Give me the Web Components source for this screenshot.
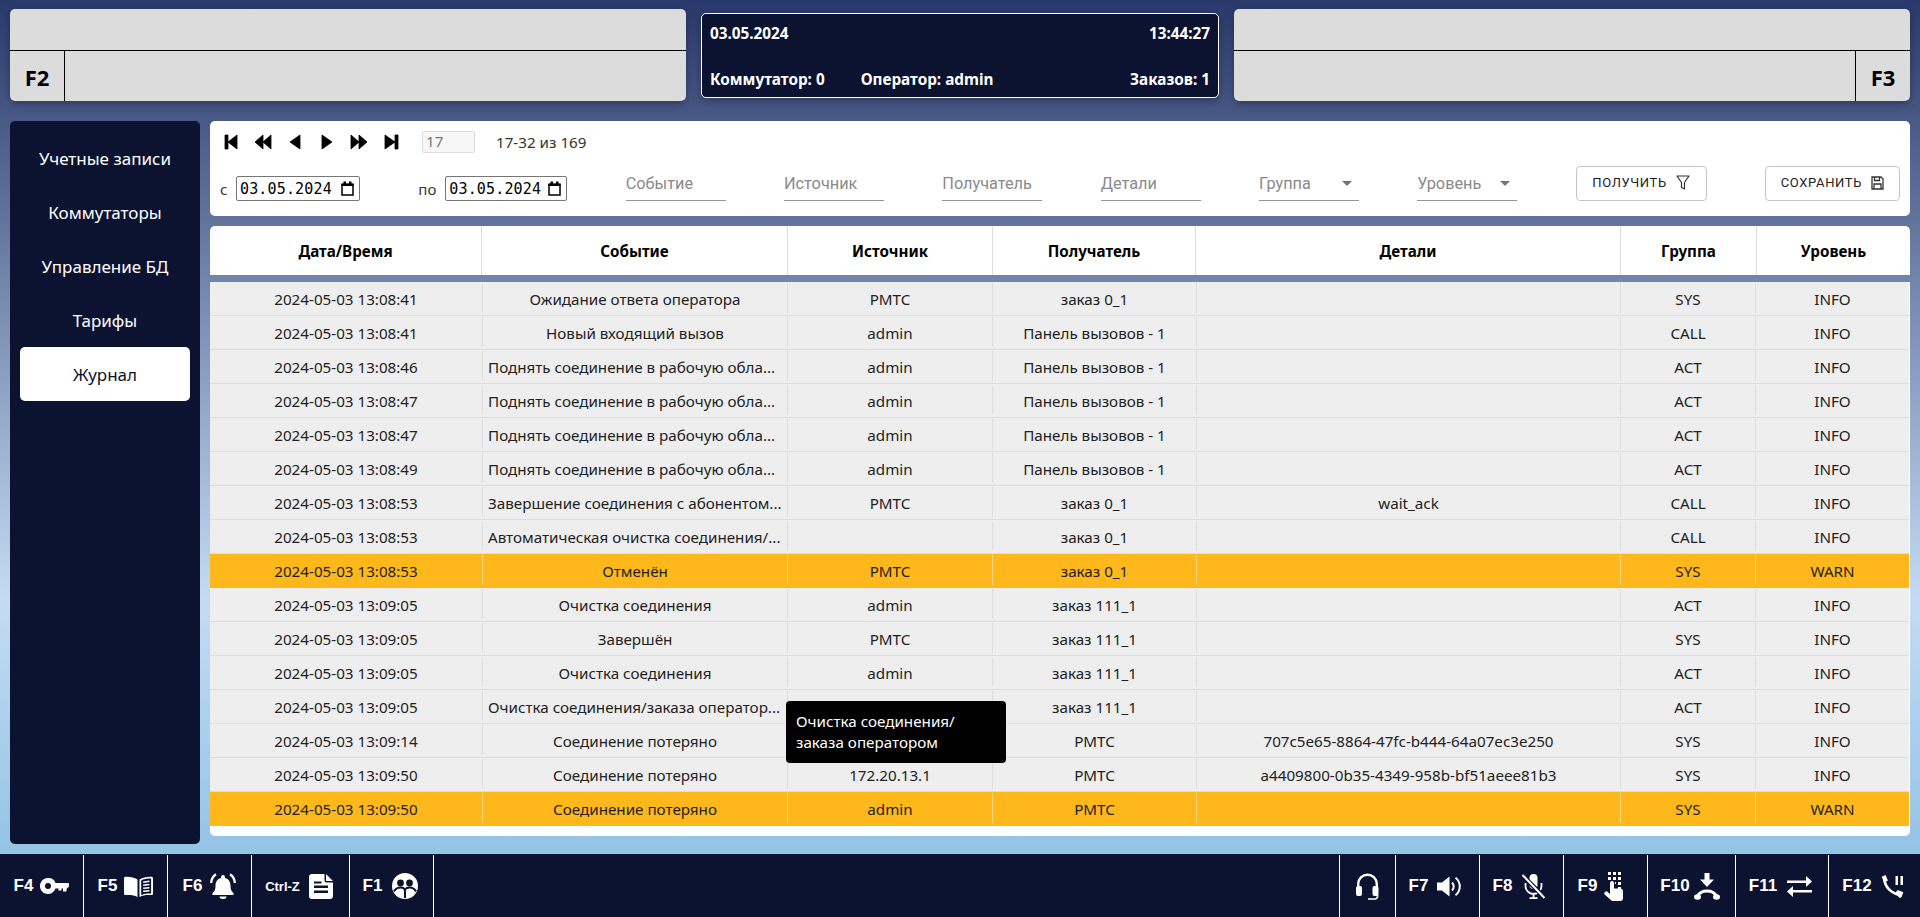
<!DOCTYPE html>
<html lang="ru">
<head>
<meta charset="utf-8">
<title>Журнал</title>
<style>
    html, body { margin: 0; height: 100%; }
    body {
        font-family: "Noto Sans", "Open Sans", sans-serif;
        background: linear-gradient(180deg, #29396b 0, #c5dbf3 600px, #93c3e5 854px);
        overflow: hidden;
    }
</style>
</head>
<body>
<app-shell>
    <top-panel slot="top" key-name="F2"></top-panel>
    <info-panel slot="top"></info-panel>
    <top-panel slot="top" key-name="F3" flip></top-panel>

    <side-nav slot="side">
        <nav-item>Учетные записи</nav-item>
        <nav-item>Коммутаторы</nav-item>
        <nav-item>Управление БД</nav-item>
        <nav-item>Тарифы</nav-item>
        <nav-item active>Журнал</nav-item>
    </side-nav>

    <filter-bar slot="main"></filter-bar>
    <journal-table slot="main"></journal-table>

    <key-bar slot="bottom">
        <key-button slot="left" label="F4" w="84" gap="7">
            <svg width="29" height="16" viewBox="0 0 29 16"><path fill="#fff" fill-rule="evenodd" d="M8 0a8 8 0 0 1 7.6 5H28a1 1 0 0 1 1 1v2.5l-2.5 2.5v2.5H23v-3h-1.5v2h-3v-2h-3A8 8 0 1 1 8 0zM8 5a3 3 0 1 0 0 6 3 3 0 0 0 0-6z"/></svg>
        </key-button>
        <key-button slot="left" label="F5" w="84" gap="7">
            <svg width="29" height="21" viewBox="0 0 29 21"><path fill="#fff" d="M13.5 3.5C10 1.2 5 .4 1.5.8 .5.9 0 1.5 0 2.5v15c0 1 .6 1.6 1.5 1.6 4.5-.4 8.5 0 12 1.9zM15.5 3.5C19 1.2 24 .4 27.5.8c1 .1 1.5.7 1.5 1.7v15c0 1-.6 1.6-1.5 1.6-4.5-.4-8.5 0-12 1.9z"/><path fill="#0c1330" d="M17.2 4.4c2.6-1.5 6.3-2 9.9-1.9v15.1c-3.5-.1-7 .3-9.9 1.6z"/><path stroke="#fff" stroke-width="1.6" d="M19.2 6.2l6.2-1M19.2 9.2l6.2-.7M19.2 12.2l6.2-.5M19.2 15.2l6.2-.4"/></svg>
        </key-button>
        <key-button slot="left" label="F6" w="84" gap="8">
            <svg width="26" height="26" viewBox="0 0 26 26"><path fill="#fff" d="M13 2a2 2 0 0 1 2 2v1C19 6 20.5 9 20.5 13c0 3.5 1 5.5 3 7v2h-21v-2c2-1.5 3-3.5 3-7 0-4 1.5-7 5.5-8V4a2 2 0 0 1 2-2zM9.5 23.5h7a3.5 2.5 0 0 1-7 0z"/><path fill="none" stroke="#fff" stroke-width="2.3" d="M6 1.2C3 3 1.4 6 1.2 10M20 1.2c3 1.8 4.6 4.8 4.8 8.8"/></svg>
        </key-button>
        <key-button slot="left" label="Ctrl-Z" small w="98" gap="9" nudge="3">
            <svg width="24" height="25" viewBox="0 0 24 25"><path fill="#fff" d="M3 0h12.5v6.500A2 2 0 0 0 17.5 8.500H24V22a3 3 0 0 1-3 3H3a3 3 0 0 1-3-3V3a3 3 0 0 1 3-3zM17 0l7 7h-7z"/><path fill="#0c1330" d="M5 7.5h7.5v2H5zM5 11.5h14V14H5zM5 16.5h14V19H5z"/></svg>
        </key-button>
        <key-button slot="left" label="F1" w="84" gap="10" nudge="2">
            <svg width="26" height="26" viewBox="0 0 26 26"><circle cx="13" cy="13" r="13" fill="#fff"/><circle cx="8.5" cy="10" r="3.4" fill="#0c1330"/><circle cx="17.5" cy="10" r="3.4" fill="#0c1330"/><path fill="none" stroke="#0c1330" stroke-width="2" d="M2 18.5c1.5-3 4-4 6.5-4 2.5 0 4.500 1 4.500 3.500v7M24 18.500c-1.500-3-4-4-6.500-4-2 0-3.500.6-4.500 2"/></svg>
        </key-button>

        <key-button slot="right" w="56" edge>
            <svg width="23" height="27" viewBox="0 0 23 27"><path fill="none" stroke="#fff" stroke-width="2.4" d="M2.2 16v-5a9.3 9.3 0 0 1 18.600 0v5"/><rect x="0" y="13" width="6" height="10" rx="2" fill="#fff"/><rect x="16.5" y="13" width="6" height="10" rx="2" fill="#fff"/><path fill="none" stroke="#fff" stroke-width="1.7" d="M21.5 22v1.500a2.500 2.500 0 0 1-2.500 2.500h-7"/></svg>
        </key-button>
        <key-button slot="right" label="F7" w="84" edge gap="9" nudge="5">
            <svg width="24" height="21" viewBox="0 0 24 21"><path fill="#fff" d="M0 6.5h5L12.5.5v20L5 14.5H0z"/><path fill="none" stroke="#fff" stroke-width="2" d="M15 6.5a5.5 5.5 0 0 1 0 8M18.5 1.8a11 11 0 0 1 0 17.400"/></svg>
        </key-button>
        <key-button slot="right" label="F8" w="84" edge gap="10" nudge="5">
            <svg width="23" height="25" viewBox="0 0 23 25"><rect x="7.5" y="0" width="8" height="15" rx="4" fill="#fff"/><path fill="none" stroke="#fff" stroke-width="1.8" d="M3.5 9v3a8 8 0 0 0 16 0V9M11.5 20v4.500M7.5 24.200h8"/><path stroke="#0c1330" stroke-width="4.5" d="M0 1l23 23"/><path stroke="#fff" stroke-width="2" d="M.5 1l22 23"/></svg>
        </key-button>
        <key-button slot="right" label="F9" w="84" edge gap="7" nudge="10">
            <svg width="19" height="29" viewBox="0 0 19 29"><path fill="#fff" d="M4 0h3v3H4zM9 0h3v3H9zM14 0h3v3h-3zM4 5h3v3H4zM9 5h3v3H9zM14 5h3v3h-3zM14 10h3v3h-3zM11 10h1v2h-1zM14 15h3v2h-3z"/><path fill="#fff" d="M6 11a2 2 0 0 1 4 0v5.500h6a3 3 0 0 1 3 3V26a3 3 0 0 1-3 3H8L.6 22.500a2 2 0 0 1 2.700-2.800L6 22z"/></svg>
        </key-button>
        <key-button slot="right" label="F10" w="88" edge gap="4" nudge="3">
            <svg width="26" height="27" viewBox="0 0 26 27"><path fill="#fff" d="M10.5 0h5v6.500H20L13 14 6 6.500h4.500z"/><path fill="none" stroke="#fff" stroke-width="3" d="M3.500 23c2-3.500 5.500-5 9.500-5s7.500 1.500 9.500 5"/><ellipse cx="3.5" cy="24" rx="3.5" ry="2.8" fill="#fff"/><ellipse cx="22.5" cy="24" rx="3.5" ry="2.8" fill="#fff"/></svg>
        </key-button>
        <key-button slot="right" label="F11" w="93" edge gap="10" nudge="3">
            <svg width="25" height="21" viewBox="0 0 25 21"><path fill="#fff" d="M0 4.500h19V0l6 5.500-6 5.500V7H0zM25 14v2.500H6V21l-6-5.500L6 10v4z"/></svg>
        </key-button>
        <key-button slot="right" label="F12" w="92" edge gap="9" nudge="3">
            <svg width="23" height="23" viewBox="0 0 23 23"><path fill="none" stroke="#fff" stroke-width="2.6" d="M3.200 4C4 12 10 18.500 19 20"/><path fill="#fff" d="M.6 1.800 4.500 0l2.400 5.400-3.400 2.400zM14.500 17.500l2.300-2.600 5.500 2.400-1.500 4.200c-.4 1-1.500 1.500-2.600 1.200z"/><path fill="#fff" d="M14.500 1H17v9h-2.500zM19.500 1H22v9h-2.500z"/></svg>
        </key-button>
    </key-bar>
</app-shell>

<script>
class AppShell extends HTMLElement {
    constructor() {
        super();
        this.attachShadow({ mode: "open" });
        this.shadowRoot.innerHTML = `
            <style>
                :host {
                    display: grid;
                    grid-template-rows: 92px 723px 63px;
                    height: 917px;
                    padding-top: 9px;
                    box-sizing: border-box;
                }
                .top {
                    display: grid;
                    grid-template-columns: 1fr 518px 1fr;
                    column-gap: 15px;
                    padding: 0 10px;
                }
                .middle {
                    display: grid;
                    grid-template-columns: 190px 1fr;
                    column-gap: 10px;
                    padding: 20px 10px 0;
                    height: 723px;
                    margin-bottom: 10px;
                }
                .main {
                    display: flex;
                    flex-direction: column;
                    gap: 10px;
                    min-width: 0;
                    min-height: 0;
                }
                .bottom { margin-top: 30px; }
            </style>
            <div class="top"><slot name="top"></slot></div>
            <div class="middle">
                <slot name="side"></slot>
                <div class="main"><slot name="main"></slot></div>
            </div>
            <div class="bottom"><slot name="bottom"></slot></div>
        `;
    }
}

class TopPanel extends HTMLElement {
    constructor() {
        super();
        this.attachShadow({ mode: "open" });
        const name = this.getAttribute("key-name");
        this.shadowRoot.innerHTML = `
            <style>
                :host {
                    display: grid;
                    grid-template-rows: 42px 1fr;
                    background: #dcdcdc;
                    border-radius: 5px;
                    box-shadow: 0 3px 8px rgba(0, 0, 0, .3);
                    overflow: hidden;
                }
                .up { border-bottom: 1px solid #000; }
                .down { display: flex; }
                :host([flip]) .down { flex-direction: row-reverse; }
                .key {
                    width: 54px;
                    display: flex;
                    align-items: center;
                    justify-content: center;
                    border-right: 1px solid #000;
                    font: bold 22px "Noto Sans", sans-serif;
                    color: #000;
                    padding-top: 2px;
                }
                :host([flip]) .key { border-right: 0; border-left: 1px solid #000; }
            </style>
            <div class="up"></div>
            <div class="down"><div class="key">${name}</div></div>
        `;
    }
}

class InfoPanel extends HTMLElement {
    constructor() {
        super();
        this.attachShadow({ mode: "open" });
        this.shadowRoot.innerHTML = `
            <style>
                :host {
                    display: flex;
                    flex-direction: column;
                    justify-content: space-between;
                    margin: 4px 0 3px;
                    padding: 9px 8px 8px;
                    background: #0c1330;
                    border: 1px solid #fff;
                    border-radius: 5px;
                    box-shadow: 0 3px 8px rgba(0, 0, 0, .3);
                    color: #fff;
                    font: bold 15.3px "Noto Sans", sans-serif;
                    box-sizing: border-box;
                }
                .line { display: flex; justify-content: space-between; }
                .left { display: flex; gap: 36px; }
            </style>
            <div class="line"><span>03.05.2024</span><span>13:44:27</span></div>
            <div class="line">
                <div class="left"><span>Коммутатор: 0</span><span>Оператор: admin</span></div>
                <span>Заказов: 1</span>
            </div>
        `;
    }
}

class SideNav extends HTMLElement {
    constructor() {
        super();
        this.attachShadow({ mode: "open" });
        this.shadowRoot.innerHTML = `
            <style>
                :host {
                    display: block;
                    height: 723px;
                    padding: 10px 10px 0;
                    background: #0c1330;
                    border-radius: 5px;
                    box-sizing: border-box;
                }
            </style>
            <slot></slot>
        `;
    }
}

class NavItem extends HTMLElement {
    constructor() {
        super();
        this.attachShadow({ mode: "open" });
        this.shadowRoot.innerHTML = `
            <style>
                :host {
                    display: flex;
                    align-items: center;
                    justify-content: center;
                    height: 54px;
                    border-radius: 5px;
                    color: #fff;
                    font-size: 17px;
                }
                :host([active]) { background: #fff; color: #0c1330; }
            </style>
            <slot></slot>
        `;
    }
}

class DateField extends HTMLElement {
    constructor() {
        super();
        this.attachShadow({ mode: "open" });
        this.shadowRoot.innerHTML = `
            <style>
                :host {
                    display: flex;
                    align-items: center;
                    justify-content: space-between;
                    height: 25px;
                    padding: 0 5px 0 3px;
                    border: 1px solid #767676;
                    border-radius: 2px;
                    box-sizing: border-box;
                    font: 15px "DejaVu Sans Mono", monospace;
                    letter-spacing: .15px;
                    color: #000;
                }
                svg { display: block; }
            </style>
            <span><slot></slot></span>
            <svg width="13" height="15" viewBox="0 0 13 15"><path fill="none" stroke="#000" stroke-width="1.5" d="M1 3.5h11V14H1z"/><path fill="#000" d="M.5 2.5h12V5H.5zM2.5.5H5v2H2.5zM8 .5h2.5v2H8z"/></svg>
        `;
    }
}

class FilterField extends HTMLElement {
    constructor() {
        super();
        this.attachShadow({ mode: "open" });
        this.shadowRoot.innerHTML = `
            <style>
                :host {
                    display: flex;
                    align-items: center;
                    justify-content: space-between;
                    width: 100px;
                    height: 35px;
                    padding: 1px 7px 0 0;
                    border-bottom: 1px solid #949494;
                    box-sizing: border-box;
                    font: 16.3px Roboto, sans-serif;
                    color: #8a8a8a;
                }
                .arrow {
                    display: none;
                    border-left: 5px solid transparent;
                    border-right: 5px solid transparent;
                    border-top: 5px solid #757575;
                }
                :host([select]) .arrow { display: block; }
            </style>
            <span><slot></slot></span>
            <span class="arrow"></span>
        `;
    }
}

class ActionButton extends HTMLElement {
    constructor() {
        super();
        this.attachShadow({ mode: "open" });
        this.shadowRoot.innerHTML = `
            <style>
                :host {
                    display: flex;
                    align-items: center;
                    justify-content: center;
                    gap: 9px;
                    height: 35px;
                    border: 1px solid #c4c4c4;
                    border-radius: 4px;
                    box-sizing: border-box;
                    font: 400 13px Roboto, sans-serif;
                    letter-spacing: .65px;
                    color: #222;
                    padding-bottom: 2px;
                }
                ::slotted(svg) { display: block; }
            </style>
            <slot></slot>
        `;
    }
}

class FilterBar extends HTMLElement {
    constructor() {
        super();
        this.attachShadow({ mode: "open" });
        this.shadowRoot.innerHTML = `
            <style>
                :host {
                    display: block;
                    height: 95px;
                    flex: none;
                    padding: 10px 10px 0;
                    background: #fff;
                    border-radius: 5px;
                    box-sizing: border-box;
                    font-size: 15.2px;
                    color: #333;
                }
                .pager { display: flex; align-items: center; height: 22px; margin-bottom: 13px; }
                .arrows { display: flex; margin: 0 15px 0 -5px; }
                .arrows span { width: 32px; display: flex; justify-content: center; }
                .arrows svg { overflow: visible; }
                .arrows path { stroke: #000; stroke-width: .8; stroke-linejoin: round; }
                .page {
                    width: 53px;
                    height: 22px;
                    padding-left: 3px;
                    margin-right: 21px;
                    background: #f7f7f7;
                    border: 1px solid #ddd;
                    border-radius: 2px;
                    box-sizing: border-box;
                    color: #777;
                    line-height: 19px;
                }
                .fields { display: flex; justify-content: space-between; align-items: flex-end; }
                .range { display: flex; align-items: center; justify-content: space-between; font-size: 15px; color: #333; }
                .range.a { width: 140px; }
                .range.b { width: 149px; }
                date-field { width: 124px; }
                .range.b date-field { width: 122px; }
                action-button.get { width: 131px; }
                action-button.save { width: 135px; }
            </style>
            <div class="pager">
                <div class="arrows">
                    <span><svg width="12" height="14" viewBox="0 0 12 14"><path d="M0 0h3v14H0zM12 0v14L3 7z"/></svg></span>
                    <span><svg width="16" height="14" viewBox="0 0 16 14"><path d="M8 0v14L0 7zM16 0v14L8 7z"/></svg></span>
                    <span><svg width="10" height="14" viewBox="0 0 10 14"><path d="M10 0v14L0 7z"/></svg></span>
                    <span><svg width="10" height="14" viewBox="0 0 10 14"><path d="M0 0v14l10-7z"/></svg></span>
                    <span><svg width="16" height="14" viewBox="0 0 16 14"><path d="M0 0v14l8-7zM8 0v14l8-7z"/></svg></span>
                    <span><svg width="13" height="14" viewBox="0 0 13 14"><path d="M10 0h3v14h-3zM0 0v14l10-7z"/></svg></span>
                </div>
                <div class="page">17</div>
                <span>17-32 из 169</span>
            </div>
            <div class="fields">
                <div class="range a"><span>с</span><date-field>03.05.2024</date-field></div>
                <div class="range b"><span>по</span><date-field>03.05.2024</date-field></div>
                <filter-field>Событие</filter-field>
                <filter-field>Источник</filter-field>
                <filter-field>Получатель</filter-field>
                <filter-field>Детали</filter-field>
                <filter-field select>Группа</filter-field>
                <filter-field select>Уровень</filter-field>
                <action-button class="get">ПОЛУЧИТЬ
                    <svg width="14" height="15" viewBox="0 0 14 15"><path fill="none" stroke="#333" stroke-width="1.2" stroke-linejoin="round" d="M1 1h12L8.5 7.5V14l-3-1.5v-5z"/></svg>
                </action-button>
                <action-button class="save">СОХРАНИТЬ
                    <svg width="13" height="14" viewBox="0 0 13 14"><path fill="none" stroke="#333" stroke-width="1.3" d="M1 1h9l2 2v10H1zM3.5 1v3.5h5V1M3 13V8h7v5"/></svg>
                </action-button>
            </div>
        `;
    }
}

const COLUMNS = "273px 305px 205px 204px 424px 135px 153px";
const HEAD_COLUMNS = "272px 306px 205px 203px 425px 136px 153px";

const LOG_ROWS = [
    ["2024-05-03 13:08:41", "Ожидание ответа оператора", "PMTC", "заказ 0_1", "", "SYS", "INFO"],
    ["2024-05-03 13:08:41", "Новый входящий вызов", "admin", "Панель вызовов - 1", "", "CALL", "INFO"],
    ["2024-05-03 13:08:46", "Поднять соединение в рабочую обла...", "admin", "Панель вызовов - 1", "", "ACT", "INFO"],
    ["2024-05-03 13:08:47", "Поднять соединение в рабочую обла...", "admin", "Панель вызовов - 1", "", "ACT", "INFO"],
    ["2024-05-03 13:08:47", "Поднять соединение в рабочую обла...", "admin", "Панель вызовов - 1", "", "ACT", "INFO"],
    ["2024-05-03 13:08:49", "Поднять соединение в рабочую обла...", "admin", "Панель вызовов - 1", "", "ACT", "INFO"],
    ["2024-05-03 13:08:53", "Завершение соединения с абонентом...", "PMTC", "заказ 0_1", "wait_ack", "CALL", "INFO"],
    ["2024-05-03 13:08:53", "Автоматическая очистка соединения/...", "", "заказ 0_1", "", "CALL", "INFO"],
    ["2024-05-03 13:08:53", "Отменён", "PMTC", "заказ 0_1", "", "SYS", "WARN"],
    ["2024-05-03 13:09:05", "Очистка соединения", "admin", "заказ 111_1", "", "ACT", "INFO"],
    ["2024-05-03 13:09:05", "Завершён", "PMTC", "заказ 111_1", "", "SYS", "INFO"],
    ["2024-05-03 13:09:05", "Очистка соединения", "admin", "заказ 111_1", "", "ACT", "INFO"],
    ["2024-05-03 13:09:05", "Очистка соединения/заказа оператор...", "", "заказ 111_1", "", "ACT", "INFO"],
    ["2024-05-03 13:09:14", "Соединение потеряно", "", "PMTC", "707c5e65-8864-47fc-b444-64a07ec3e250", "SYS", "INFO"],
    ["2024-05-03 13:09:50", "Соединение потеряно", "172.20.13.1", "PMTC", "a4409800-0b35-4349-958b-bf51aeee81b3", "SYS", "INFO"],
    ["2024-05-03 13:09:50", "Соединение потеряно", "admin", "PMTC", "", "SYS", "WARN"]
];

class JournalRow extends HTMLElement {
    constructor() {
        super();
        this.attachShadow({ mode: "open" });
    }

    set cells(values) {
        this.shadowRoot.innerHTML = `
            <style>
                :host {
                    display: grid;
                    grid-template-columns: ${COLUMNS};
                    height: 34px;
                    background: #eee;
                    border-bottom: 1px solid #ddd;
                    box-sizing: border-box;
                    font-size: 15.2px;
                    color: #222;
                }
                :host([warn]) { background: #ffb81c; border-bottom-color: #ffb81c; }
                div {
                    height: 30px;
                    margin: 1px 0;
                    line-height: 32px;
                    text-align: center;
                    white-space: nowrap;
                    border-right: 1px solid #ddd;
                    box-sizing: border-box;
                }
                .cut { text-align: left; padding-left: 5px; }
                :host([warn]) div { border-right-color: #ffd77f; }
                div:last-child { border-right: 0; }
            </style>
            ${values.map(value => `<div class="${value.endsWith("...") ? "cut" : ""}">${value}</div>`).join("")}
        `;
    }
}

class JournalTable extends HTMLElement {
    constructor() {
        super();
        this.attachShadow({ mode: "open" });
        const heads = ["Дата/Время", "Событие", "Источник", "Получатель", "Детали", "Группа", "Уровень"];
        this.shadowRoot.innerHTML = `
            <style>
                :host {
                    display: block;
                    position: relative;
                    flex: 1;
                    min-height: 0;
                }
                .head {
                    display: grid;
                    grid-template-columns: ${HEAD_COLUMNS};
                    height: 49px;
                    margin-bottom: 7px;
                    background: #fff;
                    border-radius: 5px 5px 0 0;
                    font-size: 15.2px;
                    font-weight: bold;
                    color: #000;
                }
                .head div {
                    display: flex;
                    align-items: center;
                    justify-content: center;
                    border-right: 1px solid #ddd;
                }
                .head div:last-child { border-right: 0; }
                .body {
                    height: 554px;
                    padding-right: 1px;
                    background: #fff;
                    border-radius: 0 0 5px 5px;
                    box-sizing: border-box;
                }
                .tip {
                    position: absolute;
                    left: 576px;
                    top: 475px;
                    width: 220px;
                    height: 62px;
                    padding: 10px;
                    background: #000;
                    color: #fff;
                    border-radius: 4px;
                    font-size: 15.2px;
                    line-height: 21px;
                    box-sizing: border-box;
                }
            </style>
            <div class="head">${heads.map(text => `<div>${text}</div>`).join("")}</div>
            <div class="body"></div>
            <div class="tip">Очистка соединения/<br>заказа оператором</div>
        `;
        const body = this.shadowRoot.querySelector(".body");
        LOG_ROWS.forEach(values => {
            const row = document.createElement("journal-row");
            if (values[6] === "WARN") {
                row.setAttribute("warn", "");
            }
            row.cells = values;
            body.appendChild(row);
        });
    }
}

class KeyBar extends HTMLElement {
    constructor() {
        super();
        this.attachShadow({ mode: "open" });
        this.shadowRoot.innerHTML = `
            <style>
                :host {
                    display: flex;
                    justify-content: space-between;
                    height: 63px;
                    padding-top: 1px;
                    background: #0c1330;
                    box-sizing: border-box;
                }
                div { display: flex; }
            </style>
            <div><slot name="left"></slot></div>
            <div><slot name="right"></slot></div>
        `;
    }
}

class KeyButton extends HTMLElement {
    constructor() {
        super();
        this.attachShadow({ mode: "open" });
        const label = this.getAttribute("label");
        this.style.width = this.getAttribute("w") + "px";
        this.style.gap = (this.getAttribute("gap") || 7) + "px";
        this.style.paddingRight = (this.getAttribute("nudge") || 0) + "px";
        this.shadowRoot.innerHTML = `
            <style>
                :host {
                    display: flex;
                    align-items: center;
                    justify-content: center;
                    border-right: 1px solid #fff;
                    box-sizing: border-box;
                    color: #fff;
                    font: bold 17px "Liberation Sans", sans-serif;
                }
                :host([edge]) { border-right: 0; border-left: 1px solid #fff; }
                :host([small]) .label { font: bold 13px "Liberation Sans", sans-serif; }
                ::slotted(svg) { display: block; flex: none; }
            </style>
            ${label ? `<span class="label">${label}</span>` : ""}
            <slot></slot>
        `;
    }
}

customElements.define("app-shell", AppShell);
customElements.define("top-panel", TopPanel);
customElements.define("info-panel", InfoPanel);
customElements.define("side-nav", SideNav);
customElements.define("nav-item", NavItem);
customElements.define("date-field", DateField);
customElements.define("filter-field", FilterField);
customElements.define("action-button", ActionButton);
customElements.define("filter-bar", FilterBar);
customElements.define("journal-row", JournalRow);
customElements.define("journal-table", JournalTable);
customElements.define("key-bar", KeyBar);
customElements.define("key-button", KeyButton);
</script>
</body>
</html>
